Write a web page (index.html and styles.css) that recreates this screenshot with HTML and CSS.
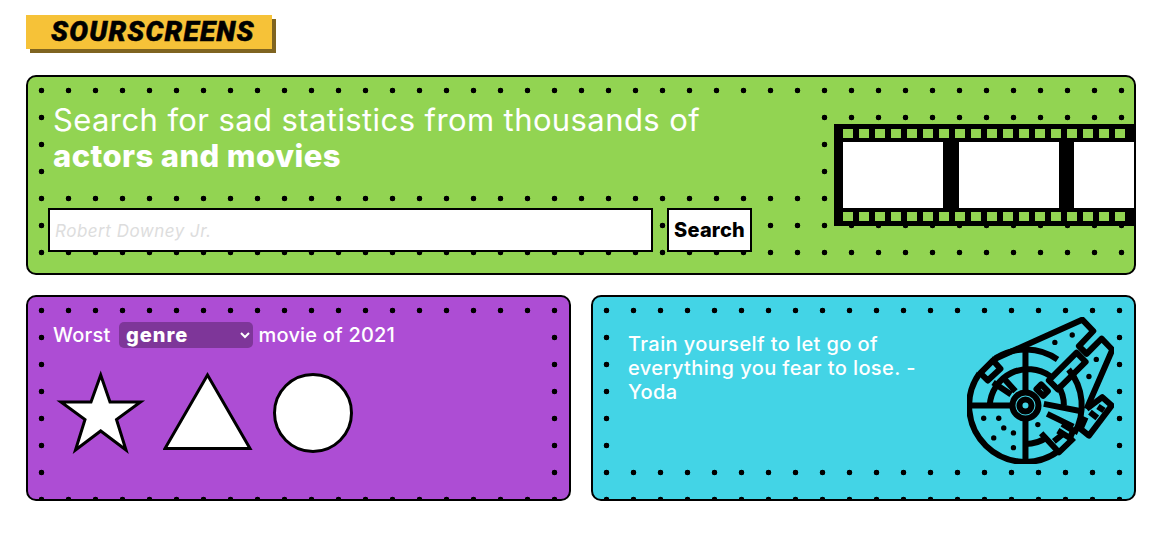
FILE: index.html
```html
<!DOCTYPE html>
<html lang="en">
<head>
    <meta charset="UTF-8">
    <meta name="viewport" content="width=device-width, initial-scale=1.0">
    <title>Sourscreens</title>
    <link rel="stylesheet" href="styles.css">
</head>
<body>
    <header class="logo">SOURSCREENS</header>

    <section class="panel hero">
        <div class="hero-main">
            <h1 class="hero-title">Search for sad statistics from thousands of<br><strong>actors and movies</strong></h1>
            <form class="search">
                <input class="search-input" type="text" placeholder="Robert Downey Jr.">
                <button class="search-button" type="button">Search</button>
            </form>
        </div>
        <div class="film">
            <div class="film-holes"></div>
            <div class="film-frames">
                <div class="film-frame"></div>
                <div class="film-frame"></div>
                <div class="film-frame"></div>
            </div>
            <div class="film-holes"></div>
        </div>
    </section>

    <div class="row">
        <section class="panel genre">
            <div class="genre-inner">
                <h2 class="genre-title">Worst
                    <select class="genre-select">
                        <option>genre</option>
                    </select>
                    movie of 2021</h2>
                <div class="shapes">
                    <svg class="shape" width="92" height="88" viewBox="55 368 92 88">
                        <polygon points="100.7,375 110,402 140.5,402 116.5,419.5 126,450 100.7,431 75.5,450 85,419.5 61,402 91,402"/>
                    </svg>
                    <svg class="shape" width="92" height="88" viewBox="163 368 92 88">
                        <polygon points="207.5,375 250,448.5 165,448.5"/>
                    </svg>
                    <svg class="shape" width="84" height="88" viewBox="271 368 84 88">
                        <circle cx="313" cy="413" r="38.5"/>
                    </svg>
                </div>
            </div>
        </section>

        <section class="panel quote">
            <div class="quote-inner">
                <p class="quote-text">Train yourself to let go of everything you fear to lose. - Yoda</p>
                <svg class="falcon" width="147" height="147" viewBox="50 50 440 440">
                    <!-- disc -->
                    <path d="M87 219A168 168 0 0 0 324 451"/>
                    <path d="M136 173A168 168 0 0 1 321 177"/>
                    <path d="M354 207A168 168 0 0 1 371 399"/>
                    <path d="M118 315A115 115 0 0 1 299 227"/>
                    <path d="M322 253A115 115 0 0 1 340 315"/>
                    <path d="M225 430A115 115 0 0 0 291 409"/>
                    <path d="M225 150V275M225 355V482M58 315H185"/>
                    <path d="M155 228L195 272M128 246L182 282"/>
                    <circle cx="225" cy="315" r="39"/>
                    <circle cx="225" cy="315" r="18"/>
                    <!-- hull -->
                    <path d="M128 178L395 58L428 92L385 137L408 160L453 115L485 148L408 325"/>
                    <path d="M378 157L405 184L322 267L295 240Z"/>
                    <path d="M258 266L272 252L292 272L278 286Z"/>
                    <path d="M90 218L128 180L150 205L112 240Z"/>
                    <!-- lower right -->
                    <path d="M280 310L392 332M290 340L368 378"/>
                    <path d="M335 370L368 390L358 412L322 390"/>
                    <path d="M272 398L325 455L370 412M310 422L340 398"/>
                    <path d="M408 325L455 290L483 315L415 405L390 385L405 350"/>
                    <path d="M418 335L440 352"/>
                    <path d="M442 318L460 330"/>
                    <!-- dots -->
                    <g class="rivets">
                        <circle cx="100" cy="353" r="8"/>
                        <circle cx="145" cy="353" r="8"/>
                        <circle cx="160" cy="382" r="8"/>
                        <circle cx="189" cy="397" r="8"/>
                        <circle cx="130" cy="412" r="8"/>
                        <circle cx="189" cy="441" r="8"/>
                        <circle cx="262" cy="372" r="8"/>
                        <circle cx="313" cy="126" r="8"/>
                        <circle cx="365" cy="104" r="8"/>
                        <circle cx="437" cy="177" r="8"/>
                        <circle cx="415" cy="228" r="8"/>
                    </g>
                </svg>
            </div>
        </section>
    </div>
</body>
</html>
```

FILE: styles.css
```css
body {
    margin: 0;
    padding: 15px 26px 0;
    font-family: Inter, "Open Sans", sans-serif;
    background-color: #fff;
    color: #fff;
}

.logo {
    box-sizing: border-box;
    width: 246px;
    height: 34px;
    padding-left: 25px;
    background-color: #f6c238;
    box-shadow: 4px 4px 0 #7f6420;
    color: #000;
    font-family: Roboto, sans-serif;
    font-size: 28px;
    font-weight: 900;
    font-style: italic;
    line-height: 34px;
    letter-spacing: 1.2px;
    -webkit-text-stroke: 0.5px #000;
}

.panel {
    box-sizing: border-box;
    border: 2px solid #000;
    border-radius: 10px;
    overflow: hidden;
    background-image: radial-gradient(circle, #000 2.6px, transparent 3.1px);
    background-size: 27px 27px;
}

/* hero */
.hero {
    display: flex;
    height: 200px;
    margin-top: 26px;
    background-color: #92d452;
    padding: 20px 0 0 20px;
}

.hero-main {
    flex: 0 0 767px;
}

.hero-title {
    margin: 0 0 18px;
    padding: 5px 5px 16px;
    background-color: #92d452;
    font-size: 31px;
    font-weight: 400;
    line-height: 36px;
    letter-spacing: 0.4px;
}

.hero-title strong {
    font-weight: 800;
}

.search {
    display: flex;
    gap: 14px;
}

.search-input {
    box-sizing: border-box;
    width: 605px;
    height: 44px;
    padding: 1px 5px 0;
    border: 2.5px solid #000;
    background-color: #fff;
    font-family: inherit;
    font-size: 17px;
    font-style: italic;
    letter-spacing: 0.5px;
}

.search-input::placeholder {
    color: #ddd;
}

.search-button {
    box-sizing: border-box;
    width: 85px;
    height: 44px;
    padding: 0;
    border: 2.5px solid #000;
    background-color: #fff;
    color: #000;
    font-family: inherit;
    font-size: 20px;
    font-weight: 800;
    letter-spacing: 0.2px;
}

.film {
    flex: 0 0 auto;
    align-self: flex-start;
    margin: 27px 0 0 19px;
    padding: 5px 9px;
    background-color: #000;
}

.film-holes {
    width: 282px;
    height: 9px;
    background-image: repeating-linear-gradient(90deg, #92d452 0 10px, #000 10px 16px);
}

.film-frames {
    display: flex;
    gap: 15.6px;
    margin: 4px 0;
}

.film-frame {
    flex: 0 0 100px;
    height: 66px;
    background-color: #fff;
}

/* bottom row */
.row {
    display: grid;
    grid-template-columns: 1fr 1fr;
    gap: 20px;
    margin-top: 20px;
}

.genre,
.quote {
    height: 206px;
    padding: 20px;
}

.genre {
    background-color: #ad4dd4;
}

.genre-inner {
    height: 100%;
    box-sizing: border-box;
    padding: 5px;
    background-color: #ad4dd4;
}

.genre-title {
    margin: 0 0 20px;
    font-size: 20px;
    font-weight: 500;
    line-height: 24px;
    letter-spacing: 0.2px;
}

.genre-select {
    width: 134px;
    height: 26px;
    margin-left: 3px;
    padding: 0 3px;
    border: none;
    border-radius: 5px;
    background-color: #7e3699;
    color: #fff;
    font-family: inherit;
    font-size: 20px;
    font-weight: 800;
    letter-spacing: 1px;
}

.shapes {
    display: flex;
    gap: 16px;
    padding-left: 2px;
}

.shape {
    display: block;
    fill: #fff;
    stroke: #000;
    stroke-width: 3px;
}

.quote {
    background-color: #43d4e6;
}

.quote-inner {
    display: flex;
    justify-content: space-between;
    align-items: flex-start;
    background-color: #43d4e6;
    padding-left: 15px;
}

.quote-text {
    width: 310px;
    margin: 15px 0 0;
    font-size: 20px;
    font-weight: 500;
    line-height: 24px;
    letter-spacing: 0.4px;
}

.falcon {
    display: block;
    flex: 0 0 auto;
    fill: none;
    stroke: #000;
    stroke-width: 18px;
    stroke-linejoin: round;
}

.rivets {
    fill: #000;
    stroke: none;
}
```
